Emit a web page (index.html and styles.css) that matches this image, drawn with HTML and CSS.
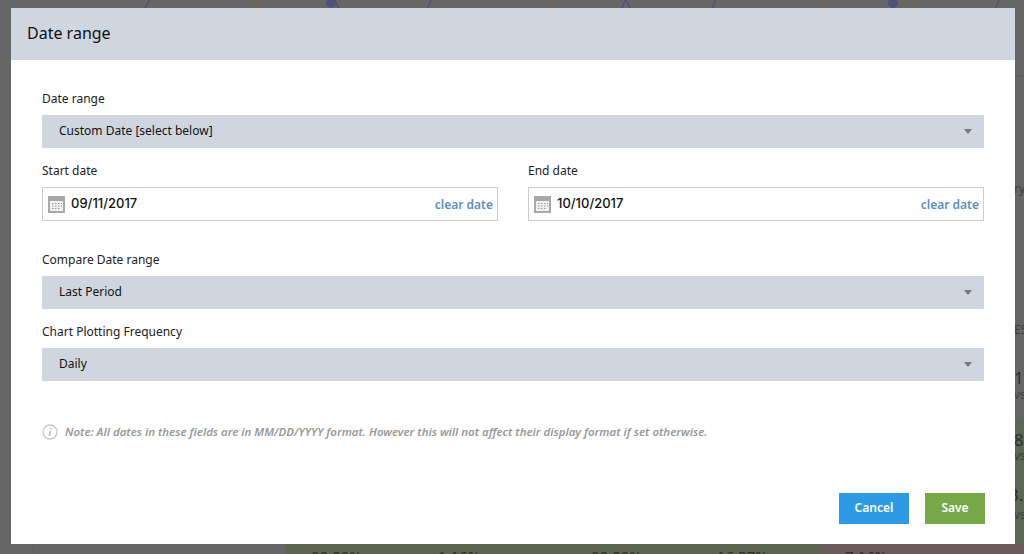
FILE: index.html
```html
<!DOCTYPE html>
<html lang="en">
<head>
<meta charset="utf-8">
<title>Date range</title>
<link rel="stylesheet" href="styles.css">
</head>
<body>
<svg class="backdrop" width="1024" height="554" viewBox="0 0 1024 554">
  <rect x="285" y="544" width="535" height="10" fill="#5c6452"/>
  <rect x="820" y="544" width="204" height="10" fill="#6a5a5a"/>
  <rect x="1015" y="419" width="9" height="125" fill="#5e6655"/>
  <path d="M33 544v10" stroke="#5c5c5c"/>
  <path d="M1015 76h9" stroke="#585858"/>
  <g fill="none" stroke-width="1.5">
    <path d="M150 -1l-5 10M432 -1l-5 10M622 8l4-9 4 9M716 -1l-4 10M1000 -1l-5 10M335 0l4 9" stroke="#50507c"/>
    <path d="M253 -1l7 10M550 -1l4 10M820 -1l5 10M918 -1l-5 10M332 9l2-3" stroke="#7c6042"/>
  </g>
  <circle cx="331" cy="3" r="5" fill="#50507c"/>
  <circle cx="893" cy="3" r="5" fill="#50507c"/>
  <g class="bg-text">
    <text x="1014" y="193">ry</text>
    <text x="1014" y="334">ES</text>
    <text x="1014" y="384" class="big">1.</text>
    <text x="1014" y="399">vs</text>
    <text x="1014" y="446" class="big">88</text>
    <text x="1014" y="460">vs</text>
    <text x="1009" y="501" class="big">3.5</text>
    <text x="1014" y="519">vs</text>
    <text x="311" y="562" class="pct">00.00%</text>
    <text x="438" y="562" class="pct">1.16%</text>
    <text x="591" y="562" class="pct">00.00%</text>
    <text x="717" y="562" class="pct">16.37%</text>
    <text x="845" y="562" class="pct">7.16%</text>
  </g>
</svg>
<main class="modal">
  <header class="modal-head">Date range</header>
  <div class="modal-body">
    <div class="field">
      <label class="label">Date range</label>
      <div class="select"><span>Custom Date [select below]</span><i class="caret"></i></div>
    </div>
    <div class="dates">
      <div class="field">
        <label class="label">Start date</label>
        <div class="date">
          <svg class="cal" width="17" height="17" viewBox="0 0 17 17"><rect width="17" height="17" fill="#a8a8a8"/><rect x="2" y="5" width="13" height="10" fill="#f0f0f0"/><path d="M4 7.5h1.5M7 7.5h1.5M10 7.5h1.5M13 7.5h1M4 10h1.5M7 10h1.5M10 10h1.5M13 10h1M4 12.5h1.5M7 12.5h1.5M10 12.5h1.5" stroke="#999" stroke-width="1.2"/></svg>
          <span class="date-value">09/11/2017</span>
          <a class="clear">clear date</a>
        </div>
      </div>
      <div class="field">
        <label class="label">End date</label>
        <div class="date">
          <svg class="cal" width="17" height="17" viewBox="0 0 17 17"><rect width="17" height="17" fill="#a8a8a8"/><rect x="2" y="5" width="13" height="10" fill="#f0f0f0"/><path d="M4 7.5h1.5M7 7.5h1.5M10 7.5h1.5M13 7.5h1M4 10h1.5M7 10h1.5M10 10h1.5M13 10h1M4 12.5h1.5M7 12.5h1.5M10 12.5h1.5" stroke="#999" stroke-width="1.2"/></svg>
          <span class="date-value">10/10/2017</span>
          <a class="clear">clear date</a>
        </div>
      </div>
    </div>
    <div class="field compare">
      <label class="label">Compare Date range</label>
      <div class="select"><span>Last Period</span><i class="caret"></i></div>
    </div>
    <div class="field">
      <label class="label">Chart Plotting Frequency</label>
      <div class="select"><span>Daily</span><i class="caret"></i></div>
    </div>
    <p class="note">
      <svg width="16" height="16" viewBox="0 0 16 16"><circle cx="8" cy="8" r="7" fill="none" stroke="#c8c8c8" stroke-width="1.3"/><path d="M8.6 3.8v1.6M8.2 6.8l-.8 5" stroke="#c0c0c0" stroke-width="1.8" fill="none"/></svg>
      <em>Note: All dates in these fields are in MM/DD/YYYY format. However this will not affect their display format if set otherwise.</em>
    </p>
    <div class="actions">
      <button class="btn cancel">Cancel</button>
      <button class="btn save">Save</button>
    </div>
  </div>
</main>
</body>
</html>
```
FILE: styles.css
```css
* { box-sizing: border-box; }
html, body { margin: 0; height: 100%; overflow: hidden; }
body {
  background: #666;
  font-family: "Noto Sans", sans-serif;
  padding: 8px 9px 10px 11px;
  position: relative;
}
.backdrop { position: absolute; left: 0; top: 0; }
.bg-text { font: 12px "Noto Sans", sans-serif; fill: #3e3e3e; }
.bg-text .big { font-size: 17px; fill: #2e2e2e; }
.bg-text .pct { font-size: 15px; fill: #2e2e2e; }
.modal {
  position: relative;
  background: #fff;
  height: 536px;
  display: flex;
  flex-direction: column;
}
.modal-head {
  height: 52px;
  background: #cfd6e0;
  color: #111;
  font-size: 16px;
  line-height: 50px;
  padding-left: 16px;
}
.modal-body { padding: 30px 31px 0; flex: 1; display: flex; flex-direction: column; }
.field { display: flex; flex-direction: column; min-width: 0; }
.label { font-size: 12px; line-height: 17px; color: #222; margin-bottom: 8px; }
.select {
  height: 33px;
  background: #cfd6e0;
  color: #111;
  font-size: 12px;
  display: flex;
  align-items: center;
  justify-content: space-between;
  padding: 0 12px 2px 17px;
}
.caret { border: 4.5px solid transparent; border-top: 5px solid #777; border-bottom: 0; margin-top: 2px; }
.dates { display: grid; grid-template-columns: 1fr 1fr; gap: 30px; margin-top: 14px; }
.date {
  height: 34px;
  border: 1px solid #ccc;
  display: flex;
  align-items: center;
  padding: 0 4px 0 5px;
}
.cal { flex: none; }
.date-value { font: 500 13px Inter, sans-serif; color: #111; margin-left: 6px; margin-top: -2px; }
.clear { margin-left: auto; font-size: 12px; font-weight: 600; color: #5a8fc2; }
.compare { margin-top: 30px; margin-bottom: 14px; }
.note {
  margin: 43px 0 0;
  display: flex;
  align-items: center;
  gap: 7px;
  font-size: 11.43px;
  font-weight: 600;
  color: #999;
  line-height: 16px;
}
.actions { margin-top: 53px; display: flex; justify-content: flex-end; gap: 16px; margin-right: -1px; }
.btn {
  height: 31px;
  border: 0;
  color: #fff;
  font: 600 12px "Noto Sans", sans-serif;
  padding: 0 0 2px;
}
.cancel { width: 70px; background: #2d9ae6; }
.save { width: 60px; background: #76a846; }
```
